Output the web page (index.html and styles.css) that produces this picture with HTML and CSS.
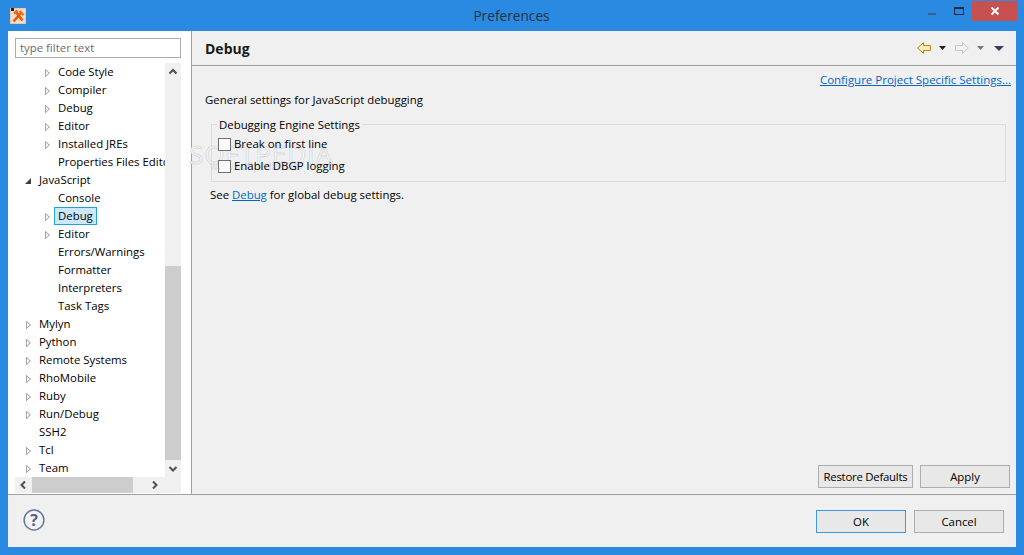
FILE: index.html
```html
<!DOCTYPE html>
<html lang="en">
<head>
<meta charset="utf-8">
<title>Preferences</title>
<link rel="stylesheet" href="styles.css">
</head>
<body>
<div class="window">
  <header class="titlebar">
    <svg class="app-icon" width="16" height="16" viewBox="0 0 16 16"><rect width="16" height="16" fill="#f3dcc9"/><rect x="0.5" y="0.5" width="15" height="15" fill="none" stroke="#e9c7ae"/><rect x="1" y="0" width="3" height="3" fill="#1c1c1c"/><path d="M3.5 13.5 L10.5 5.5 M6 4 L12.5 12.5" stroke="#e8590c" stroke-width="2.6"/><path d="M4 5.5 L7.5 2.5 M9.5 3 L13.5 7" stroke="#f06a14" stroke-width="2.4"/></svg>
    <div class="title">Preferences</div>
    <div class="controls">
      <span class="btn-min"></span>
      <span class="btn-max"></span>
      <span class="btn-close"><svg width="10" height="10" viewBox="0 0 10 10"><path d="M1.5 1.5 L8.5 8.5 M8.5 1.5 L1.5 8.5" stroke="#fff" stroke-width="2"/></svg></span>
    </div>
  </header>
  <div class="client">
    <div class="main">
      <aside class="left">
        <div class="filter">type filter text</div>
        <div class="tree-box">
          <div class="tree-top">
            <ul class="tree">
              <li class="row l2"><i class="tw closed"></i><span>Code Style</span></li>
              <li class="row l2"><i class="tw closed"></i><span>Compiler</span></li>
              <li class="row l2"><i class="tw closed"></i><span>Debug</span></li>
              <li class="row l2"><i class="tw closed"></i><span>Editor</span></li>
              <li class="row l2"><i class="tw closed"></i><span>Installed JREs</span></li>
              <li class="row l2"><i class="tw"></i><span>Properties Files Editor</span></li>
              <li class="row l1"><i class="tw open"></i><span>JavaScript</span></li>
              <li class="row l2"><i class="tw"></i><span>Console</span></li>
              <li class="row l2"><i class="tw closed"></i><span class="sel">Debug</span></li>
              <li class="row l2"><i class="tw closed"></i><span>Editor</span></li>
              <li class="row l2"><i class="tw"></i><span>Errors/Warnings</span></li>
              <li class="row l2"><i class="tw"></i><span>Formatter</span></li>
              <li class="row l2"><i class="tw"></i><span>Interpreters</span></li>
              <li class="row l2"><i class="tw"></i><span>Task Tags</span></li>
              <li class="row l1"><i class="tw closed"></i><span>Mylyn</span></li>
              <li class="row l1"><i class="tw closed"></i><span>Python</span></li>
              <li class="row l1"><i class="tw closed"></i><span>Remote Systems</span></li>
              <li class="row l1"><i class="tw closed"></i><span>RhoMobile</span></li>
              <li class="row l1"><i class="tw closed"></i><span>Ruby</span></li>
              <li class="row l1"><i class="tw closed"></i><span>Run/Debug</span></li>
              <li class="row l1"><i class="tw"></i><span>SSH2</span></li>
              <li class="row l1"><i class="tw closed"></i><span>Tcl</span></li>
              <li class="row l1"><i class="tw closed"></i><span>Team</span></li>
            </ul>
            <div class="vscroll">
              <svg class="sb-arrow" width="16" height="17" viewBox="0 0 16 17"><path d="M4.5 10.5 L8 7 L11.5 10.5" fill="none" stroke="#505050" stroke-width="2"/></svg>
              <div class="vtrack"><div class="vthumb"></div></div>
              <svg class="sb-arrow" width="16" height="17" viewBox="0 0 16 17"><path d="M4.5 7 L8 10.5 L11.5 7" fill="none" stroke="#505050" stroke-width="2"/></svg>
            </div>
          </div>
          <div class="hscroll">
            <svg class="sb-arrow" width="17" height="16" viewBox="0 0 17 16"><path d="M10 4.5 L6.5 8 L10 11.5" fill="none" stroke="#505050" stroke-width="2"/></svg>
            <div class="hthumb"></div>
            <svg class="sb-arrow" width="17" height="16" viewBox="0 0 17 16"><path d="M7 4.5 L10.5 8 L7 11.5" fill="none" stroke="#505050" stroke-width="2"/></svg>
          </div>
        </div>
      </aside>
      <section class="right">
        <div class="page-head">
          <h1>Debug</h1>
          <div class="nav">
            <svg width="14" height="12" viewBox="0 0 14 12"><path d="M6.5 .5 L.7 6 L6.5 11.5 V8.5 H13.5 V3.5 H6.5 Z" fill="#ffeeb0" stroke="#b8821c"/></svg>
            <svg class="drop" width="7" height="4" viewBox="0 0 7 4"><path d="M0 0 H7 L3.5 4 Z" fill="#222"/></svg>
            <svg class="fwd" width="14" height="12" viewBox="0 0 14 12"><path d="M7.5 .5 L13.3 6 L7.5 11.5 V8.5 H.5 V3.5 H7.5 Z" fill="#f2f2ee" stroke="#c8c8c4"/></svg>
            <svg class="drop drop-off" width="7" height="4" viewBox="0 0 7 4"><path d="M0 0 H7 L3.5 4 Z" fill="#777"/></svg>
            <svg class="menu" width="10" height="5" viewBox="0 0 10 5"><path d="M0 0 H10 L5 5 Z" fill="#3f3a5c"/></svg>
          </div>
        </div>
        <div class="page-body">
          <div class="config"><a href="#">Configure Project Specific Settings...</a></div>
          <p class="desc">General settings for JavaScript debugging</p>
          <fieldset class="group">
            <legend>Debugging Engine Settings</legend>
            <div class="watermark">SOFTPEDIA</div>
            <div class="watermark-url">www.softpedia.com</div>
            <label class="check"><i class="box"></i>Break on first line</label>
            <label class="check"><i class="box"></i>Enable DBGP logging</label>
          </fieldset>
          <p class="see">See <a href="#">Debug</a> for global debug settings.</p>
          <div class="actions">
            <button class="btn restore">Restore Defaults</button>
            <button class="btn apply">Apply</button>
          </div>
        </div>
      </section>
    </div>
    <footer class="footer">
      <svg class="help" width="22" height="22" viewBox="0 0 22 22"><circle cx="11" cy="11" r="9.9" fill="#f4f4f6" stroke="#65789a" stroke-width="1.5"/><text x="11" y="16.5" class="q">?</text></svg>
      <div class="footer-btns">
        <button class="btn ok">OK</button>
        <button class="btn cancel">Cancel</button>
      </div>
    </footer>
  </div>
</div>
</body>
</html>
```

FILE: styles.css
```css
* { box-sizing: border-box; }
html, body { margin: 0; padding: 0; }
body { font-family: "Open Sans", "Noto Sans", sans-serif; font-size: 11.4px; color: #000; overflow: hidden; }
.window { width: 1024px; height: 555px; background: #2a8ae2; display: flex; flex-direction: column; padding: 0 8px 8px; }
.titlebar { height: 31px; flex: none; display: flex; align-items: flex-start; position: relative; }
.app-icon { margin: 8px 0 0 2px; }
.title { position: absolute; left: -1px; right: 0; top: 7px; text-align: center; font-size: 13.7px; line-height: 18px; color: #25313d; }
.controls { margin-left: auto; display: flex; align-items: flex-start; position: relative; margin-right: -1px; }
.btn-min { width: 8px; height: 2px; background: #35608f; margin: 13px 18px 0 0; }
.btn-max { width: 10px; height: 8px; border: 1px solid #1d2b3a; border-top-width: 2px; margin: 7px 8px 0 0; }
.btn-close { width: 45px; height: 20px; margin-top: 1px; background: #c75050; display: flex; align-items: center; justify-content: center; }
.client { flex: 1; display: flex; flex-direction: column; background: #f0f0f0; min-height: 0; }
.main { height: 463px; display: flex; }
.left { width: 184px; flex: none; background: #fff; border-right: 1px solid #a0a0a0; padding: 7px 10px 0 7px; }
.filter { height: 20px; border: 1px solid #ababab; padding-left: 4px; line-height: 18px; color: #6d6d6d; }
.tree-box { margin-top: 5px; }
.tree-top { display: flex; height: 414px; }
.tree { list-style: none; margin: 0; padding: 0; width: 150px; overflow: hidden; }
.row { height: 18px; display: flex; align-items: center; white-space: nowrap; }
.l1 { padding-left: 11px; }
.l2 { padding-left: 30px; }
.tw { width: 5px; height: 9px; flex: none; margin-right: 8px; position: relative; top: 1px; }
.closed { background: #a6a6a6; clip-path: polygon(0 0, 100% 50%, 0 100%, 0 0, 1px 2px, 1px calc(100% - 2px), calc(100% - 1.5px) 50%, 1px 2px); }
.open { background: #404040; width: 6px; height: 6px; clip-path: polygon(100% 0, 100% 100%, 0 100%); margin: 0 8px 0 -1px; }
.row span { padding: 0 3px; height: 18px; line-height: 17px; margin-left: -3px; }
.row .sel { background: #cce8ff; border: 1px solid #26a0da; line-height: 15px; padding: 0 3px; height: 18px; margin-left: -4px; }
.vscroll { width: 16px; flex: none; background: #f0f0f0; display: flex; flex-direction: column; }
.sb-arrow { display: block; flex: none; }
.vtrack { flex: 1; display: flex; flex-direction: column; justify-content: flex-end; }
.vthumb { height: 194px; background: #cdcdcd; }
.hscroll { height: 16px; background: #f0f0f0; display: flex; align-items: center; }
.hthumb { width: 101px; height: 16px; background: #cdcdcd; }
.hscroll .sb-arrow:last-child { margin-left: 13px; }
.right { flex: 1; display: flex; flex-direction: column; min-width: 0; }
.page-head { height: 35px; border-bottom: 1px solid #a0a0a0; flex: none; display: flex; align-items: center; padding: 0 12px 0 13px; }
.page-head h1 { margin: 0; font-size: 14px; font-weight: 700; color: #1a1a1a; }
.nav { margin-left: auto; display: flex; align-items: center; }
.nav .drop { margin: 0 9px 0 8px; }
.nav .drop-off { margin-right: 10px; }
.page-body { flex: 1; position: relative; display: flex; flex-direction: column; padding: 5px 6px 6px 13px; min-height: 0; }
.config { text-align: right; line-height: 18px; margin-right: -1px; font-size: 11.5px; }
a { color: #0066cc; }
.desc { margin: 2px 0 0; line-height: 18px; height: 18px; }
.group { margin: 6px 4px 0 6px; padding: 0 0 0 6px; height: 67px; border: 1px solid #dcdcdc; position: relative; min-width: 0; }
.group legend { padding: 2px 2px 0; margin-left: -1px; line-height: 16px; }
.watermark { position: absolute; left: -23px; top: 6px; font-size: 26px; letter-spacing: 1px; color: #f8f8f8; -webkit-text-stroke: .6px #cfcfcf; line-height: 30px; }
.watermark-url { position: absolute; left: -2px; top: 26px; font-size: 10px; color: #d8d8d8; line-height: 14px; }
.check { display: flex; align-items: center; height: 22px; position: relative; padding-bottom: 1px; }
.box { width: 13px; height: 13px; border: 1px solid #707070; background: rgba(255,255,255,.8); margin: 1px 3px 0 0; flex: none; }
.see { margin: 4px 0 0 5px; line-height: 18px; }
.actions { margin-top: auto; display: flex; justify-content: flex-end; gap: 7px; }
.btn { height: 23px; padding: 0; font: inherit; color: #000; background: #e8e8e8; border: 1px solid #adadad; }
.restore { width: 95px; letter-spacing: -.25px; }
.apply { width: 90px; }
.footer { flex: 1; border-top: 1px solid #a0a0a0; display: flex; align-items: center; justify-content: space-between; padding: 0 12px 0 15px; }
.help { position: relative; top: -1px; }
.q { font-size: 16px; font-weight: 700; fill: #4f6487; text-anchor: middle; }
.footer-btns { display: flex; gap: 8px; }
.ok { width: 90px; border-color: #3c98e8; }
.cancel { width: 90px; }
```
